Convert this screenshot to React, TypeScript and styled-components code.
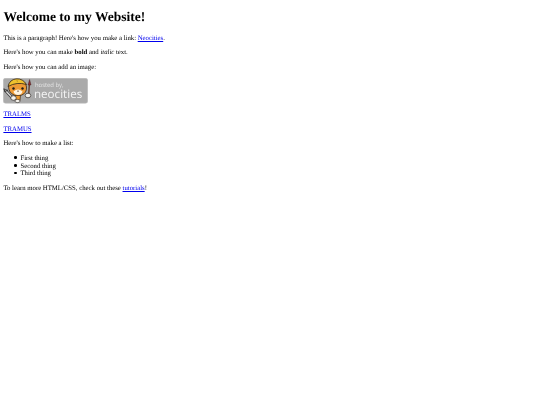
import React from "react";
import styled, { createGlobalStyle } from "styled-components";

const GlobalStyle = createGlobalStyle`
    html, body {
        margin: 0;
        background: #ffffff;
    }
    body {
        font-family: "Liberation Serif", "Times New Roman", serif;
        font-size: 6.75px;
        line-height: 7.8px;
        color: #000000;
        text-rendering: geometricPrecision;
    }
`;

const SPage = styled.div`
    padding: 3.4px;
    filter: blur(0.3px);
`;

const STitle = styled.h1`
    margin: 5.5px 0 10.4px;
    font-size: 13.5px;
    line-height: 15.5px;
    font-weight: 700;
`;

const SText = styled.p`
    margin: 6.75px 0;
`;

const SLinkRow = styled.p`
    margin: 7.3px 0 6.75px;
`;

const SLink = styled.a`
    color: #0000ee;
    text-decoration: underline;
`;

const SList = styled.ul`
    margin: 6.4px 0;
    padding-left: 17px;
    list-style: none;
`;

const SItem = styled.li`
    &::before {
        content: "";
        display: inline-block;
        width: 2.6px;
        height: 2.6px;
        margin-left: -6.4px;
        margin-right: 3.8px;
        border-radius: 50%;
        background: #000000;
        vertical-align: 1.1px;
    }
`;

const SBadge = styled.svg`
    display: block;
    width: 85px;
    height: 25.5px;
`;

const NeocitiesBadge: React.FC = () => (
    <SBadge viewBox="0 0 85 25.5" role="img" aria-label="hosted by neocities">
        <rect x="0.3" y="0.3" width="84.4" height="24.9" rx="2.2" fill="#aaaaaa" stroke="#bdbdbd" strokeWidth="0.6" />
        {/* wrench */}
        <path d="M2.5 12.5 L9 19.5" stroke="#3c3c3c" strokeWidth="3" strokeLinecap="round" />
        <path d="M2.5 12.5 L9 19.5" stroke="#d9d9d9" strokeWidth="1.4" strokeLinecap="round" />
        <path d="M0.8 10.5 L2 13.5 L5 12" stroke="#3c3c3c" strokeWidth="1.1" fill="none" />
        {/* brush */}
        <path d="M26.3 7 L25.6 18" stroke="#6a4630" strokeWidth="1.5" strokeLinecap="round" />
        <path d="M26.6 1.5 L28 7 L25 7 Z" fill="#8e2b2f" stroke="#3a2020" strokeWidth="0.4" />
        {/* legs and paws */}
        <path d="M12 17 L17.5 17 L17 22.5 L12.5 22.5 Z" fill="#ef9a2d" stroke="#3a2a1a" strokeWidth="0.7" />
        <ellipse cx="25" cy="17.5" rx="2.8" ry="2.3" fill="#f7f4ee" stroke="#2f2a26" strokeWidth="0.7" />
        <ellipse cx="10.5" cy="20" rx="2.8" ry="2.3" fill="#f7f4ee" stroke="#2f2a26" strokeWidth="0.7" />
        <ellipse cx="14.5" cy="23" rx="2.6" ry="1.6" fill="#f7f4ee" stroke="#2f2a26" strokeWidth="0.6" />
        {/* head */}
        <path d="M5.5 8 Q6 4 10 4 L20 4 Q23.5 5 23.5 9 Q24 15 18.5 17.2 L11.5 17.2 Q5.5 15 5.5 8 Z" fill="#ee9a35" stroke="#33261a" strokeWidth="0.8" />
        {/* hard hat */}
        <path d="M5 8.5 Q6.5 1.5 13.5 0.8 Q20 0.6 23.5 6.5 Q14 3.5 5 8.5 Z" fill="#f0c22e" stroke="#33261a" strokeWidth="0.8" />
        <path d="M13.5 1 L14.5 4" stroke="#a8801c" strokeWidth="0.6" />
        {/* face */}
        <path d="M10.5 13.5 Q15 9.5 19.5 13.5 Q18.5 17 15 17 Q11.5 17 10.5 13.5 Z" fill="#fff3e0" />
        <circle cx="10.5" cy="10.5" r="1.2" fill="#1e1a18" />
        <circle cx="19.5" cy="10.5" r="1.2" fill="#1e1a18" />
        <path d="M14 12.8 L16 12.8 L15 14 Z" fill="#33261a" />
        <text x="32" y="9.4" fontFamily="'Open Sans', sans-serif" fontSize="5.9" fill="#e4e4e4">hosted by,</text>
        <text x="31" y="20.4" fontFamily="'Open Sans', sans-serif" fontSize="11.6" fill="#f4f4f4">neocities</text>
    </SBadge>
);

export default function App() {
    return (
        <SPage>
            <GlobalStyle />
            <STitle>Welcome to my Website!</STitle>
            <SText>
                This is a paragraph! Here's how you make a link: <SLink href="#">Neocities</SLink>.
            </SText>
            <SText>
                Here's how you can make <strong>bold</strong> and <em>italic</em> text.
            </SText>
            <SText>Here's how you can add an image:</SText>
            <NeocitiesBadge />
            <SLinkRow>
                <SLink href="#">TRALMS</SLink>
            </SLinkRow>
            <SText>
                <SLink href="#">TRAMUS</SLink>
            </SText>
            <SText>Here's how to make a list:</SText>
            <SList>
                <SItem>First thing</SItem>
                <SItem>Second thing</SItem>
                <SItem>Third thing</SItem>
            </SList>
            <SText>
                To learn more HTML/CSS, check out these <SLink href="#">tutorials</SLink>!
            </SText>
        </SPage>
    );
}
